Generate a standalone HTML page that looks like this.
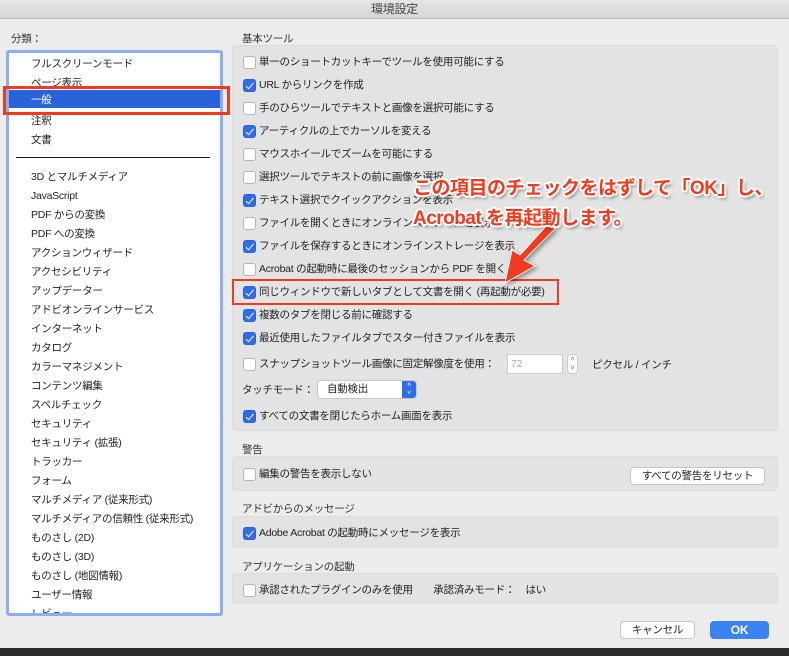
<!DOCTYPE html>
<html><head><meta charset="utf-8"><style>
*{margin:0;padding:0;box-sizing:border-box}
body{width:789px;height:656px;background:#ececec;font-family:"Liberation Sans","Noto Sans CJK JP",sans-serif;font-size:10.5px;letter-spacing:-0.25px;color:#222;position:relative;overflow:hidden}
.a{position:absolute;white-space:nowrap}
.title{left:0;top:0;width:789px;height:19px;background:linear-gradient(#e6e6e6,#d6d6d6);border-bottom:1px solid #b8b8b8;text-align:center;font-size:12px;line-height:18px;color:#444}
.list{left:6px;top:50px;width:217px;height:566px;background:#fff;border:3px solid #8aaef0;border-radius:3px;overflow:hidden}
.li{position:absolute;left:22px;line-height:14px}
.box{background:#e3e3e3;border:1px solid #dcdcdc;border-radius:4px}
.cb{position:absolute;left:243px;width:13px;height:13px;border:1px solid #b5b5b5;border-radius:3px;background:#fff}
.cb.on{background:#2f6ee8;border-color:#2a62d9}
.cb.on::after{content:"";position:absolute;left:3.5px;top:1px;width:3px;height:6.5px;border:solid #fff;border-width:0 1.7px 1.7px 0;transform:rotate(40deg)}
.t{position:absolute;left:259px;line-height:14px}
.lbl{position:absolute;left:242px;color:#333}
.btn{background:#fff;border:1px solid #c4c4c4;border-radius:4px;text-align:center;line-height:16px}
.ann{position:absolute;font-size:19px;font-weight:bold;color:#f23a1c;text-shadow:-2px 0 #fff,2px 0 #fff,0 -2px #fff,0 2px #fff,-1.5px -1.5px #fff,1.5px 1.5px #fff,-1.5px 1.5px #fff,1.5px -1.5px #fff,2px 3px 3px rgba(0,0,0,.45);letter-spacing:-0.5px}
</style></head><body>
<div class="a title">環境設定</div>
<div class="a" style="left:11px;top:31px;color:#333">分類：</div>
<div class="a list">
<div class="a" style="left:0;top:37px;width:211px;height:18px;background:#2a62d9"></div>
<div class="li" style="top:4px">フルスクリーンモード</div>
<div class="li" style="top:23px">ページ表示</div>
<div class="li" style="top:40px;color:#fff">一般</div>
<div class="li" style="top:61px">注釈</div>
<div class="li" style="top:80px">文書</div>
<div class="a" style="left:7px;top:104px;width:194px;height:1px;background:#111"></div>
<div class="li" style="top:117px">3D とマルチメディア</div>
<div class="li" style="top:136px">JavaScript</div>
<div class="li" style="top:155px">PDF からの変換</div>
<div class="li" style="top:174px">PDF への変換</div>
<div class="li" style="top:193px">アクションウィザード</div>
<div class="li" style="top:212px">アクセシビリティ</div>
<div class="li" style="top:231px">アップデーター</div>
<div class="li" style="top:250px">アドビオンラインサービス</div>
<div class="li" style="top:269px">インターネット</div>
<div class="li" style="top:288px">カタログ</div>
<div class="li" style="top:307px">カラーマネジメント</div>
<div class="li" style="top:326px">コンテンツ編集</div>
<div class="li" style="top:345px">スペルチェック</div>
<div class="li" style="top:364px">セキュリティ</div>
<div class="li" style="top:383px">セキュリティ (拡張)</div>
<div class="li" style="top:402px">トラッカー</div>
<div class="li" style="top:421px">フォーム</div>
<div class="li" style="top:440px">マルチメディア (従来形式)</div>
<div class="li" style="top:459px">マルチメディアの信頼性 (従来形式)</div>
<div class="li" style="top:478px">ものさし (2D)</div>
<div class="li" style="top:497px">ものさし (3D)</div>
<div class="li" style="top:516px">ものさし (地図情報)</div>
<div class="li" style="top:535px">ユーザー情報</div>
<div class="li" style="top:554px">レビュー</div>
</div>
<div class="a" style="left:3px;top:86px;width:227px;height:29px;border:3px solid #f23a1c"></div>

<div class="lbl" style="top:31px">基本ツール</div>
<div class="a box" style="left:232px;top:45px;width:546px;height:386px"></div>
<div class="cb" style="top:56px"></div><div class="t" style="top:55px">単一のショートカットキーでツールを使用可能にする</div>
<div class="cb on" style="top:79px"></div><div class="t" style="top:78px">URL からリンクを作成</div>
<div class="cb" style="top:102px"></div><div class="t" style="top:101px">手のひらツールでテキストと画像を選択可能にする</div>
<div class="cb on" style="top:125px"></div><div class="t" style="top:124px">アーティクルの上でカーソルを変える</div>
<div class="cb" style="top:148px"></div><div class="t" style="top:147px">マウスホイールでズームを可能にする</div>
<div class="cb" style="top:171px"></div><div class="t" style="top:170px">選択ツールでテキストの前に画像を選択</div>
<div class="cb on" style="top:194px"></div><div class="t" style="top:193px">テキスト選択でクイックアクションを表示</div>
<div class="cb" style="top:217px"></div><div class="t" style="top:216px">ファイルを開くときにオンラインストレージを表示</div>
<div class="cb on" style="top:240px"></div><div class="t" style="top:239px">ファイルを保存するときにオンラインストレージを表示</div>
<div class="cb" style="top:263px"></div><div class="t" style="top:262px">Acrobat の起動時に最後のセッションから PDF を開く</div>
<div class="cb on" style="top:286px"></div><div class="t" style="top:285px">同じウィンドウで新しいタブとして文書を開く (再起動が必要)</div>
<div class="cb on" style="top:309px"></div><div class="t" style="top:308px">複数のタブを閉じる前に確認する</div>
<div class="cb on" style="top:332px"></div><div class="t" style="top:331px">最近使用したファイルタブでスター付きファイルを表示</div>
<div class="cb" style="top:358px"></div><div class="t" style="top:357px">スナップショットツール画像に固定解像度を使用：</div>
<div class="a" style="left:507px;top:354px;width:56px;height:20px;background:#fff;border:1px solid #ccc;color:#aaa;padding-left:3px;line-height:18px">72</div>
<div class="a" style="left:567px;top:354px;width:11px;height:20px;background:#fff;border:1px solid #ccc;border-radius:4px;font-size:7px;line-height:9px;text-align:center;color:#666">˄<br>˅</div>
<div class="a" style="left:592px;top:357px">ピクセル / インチ</div>
<div class="a" style="left:242px;top:382px">タッチモード：</div>
<div class="a" style="left:317px;top:380px;width:100px;height:19px;background:#fff;border:1px solid #c8c8c8;border-radius:4px;padding-left:9px;line-height:17px;overflow:hidden">自動検出<div class="a" style="right:0;top:0;width:14px;height:19px;background:#2f6ee8;color:#fff;font-size:7px;line-height:8px;text-align:center;padding-top:1px">˄<br>˅</div></div>
<div class="cb on" style="top:410px"></div><div class="t" style="top:409px">すべての文書を閉じたらホーム画面を表示</div>

<div class="a" style="left:232px;top:279px;width:327px;height:26px;border:2px solid #f23a1c"></div>

<div class="lbl" style="top:442px">警告</div>
<div class="a box" style="left:232px;top:456px;width:546px;height:35px"></div>
<div class="cb" style="top:468px"></div><div class="t" style="top:467px">編集の警告を表示しない</div>
<div class="a btn" style="left:630px;top:467px;width:135px;height:18px">すべての警告をリセット</div>

<div class="lbl" style="top:501px">アドビからのメッセージ</div>
<div class="a box" style="left:232px;top:516px;width:546px;height:32px"></div>
<div class="cb on" style="top:527px"></div><div class="t" style="top:526px">Adobe Acrobat の起動時にメッセージを表示</div>

<div class="lbl" style="top:559px">アプリケーションの起動</div>
<div class="a box" style="left:232px;top:573px;width:546px;height:31px"></div>
<div class="cb" style="top:584px"></div><div class="t" style="top:583px">承認されたプラグインのみを使用　　承認済みモード：　はい</div>

<div class="a btn" style="left:620px;top:621px;width:75px;height:18px">キャンセル</div>
<div class="a" style="left:710px;top:621px;width:59px;height:18px;background:#3a83f2;border-radius:4px;color:#fff;text-align:center;line-height:18px;font-weight:bold;font-size:12px">OK</div>

<div class="a" style="left:0;top:648px;width:789px;height:8px;background:#2a2a2a"></div>

<svg class="a" style="left:0;top:0" width="789" height="656">
<polygon points="548,224 555,229 524,260 535,266 505,283 512,250 520,255" fill="#f23a1c" stroke="#fff" stroke-width="1" style="filter:drop-shadow(2px 2px 2px rgba(0,0,0,.4))"/>
</svg>
<div class="ann" style="left:413px;top:173px">この項目のチェックをはずして「OK」し、</div>
<div class="ann" style="left:413px;top:203px">Acrobat を再起動します。</div>
</body></html>
